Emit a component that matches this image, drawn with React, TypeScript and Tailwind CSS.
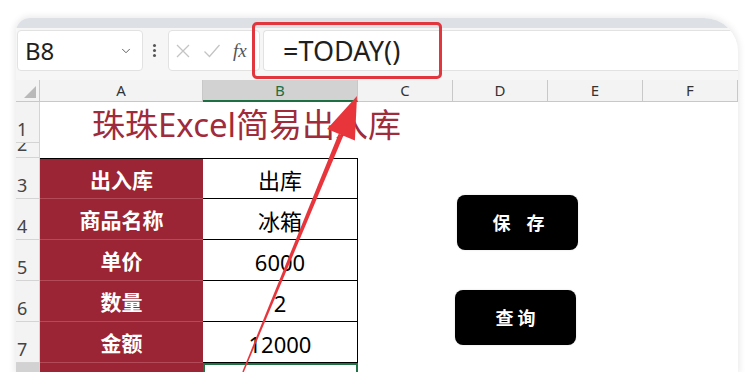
import { Fragment } from "react"
import { ChevronDown } from "lucide-react"

type RowProp = {
  n: string
  label: string
  value: string
  row: string
}

const rows: RowProp[] = [
  { n: "3", label: "出入库", value: "出库", row: "row-start-3" },
  { n: "4", label: "商品名称", value: "冰箱", row: "row-start-4" },
  { n: "5", label: "单价", value: "6000", row: "row-start-5" },
  { n: "6", label: "数量", value: "2", row: "row-start-6" },
  { n: "7", label: "金额", value: "12000", row: "row-start-7" },
]

const cols = ["C", "D", "E", "F"]

function RowHead({ n, row, active }: { n: string; row: string; active?: boolean }) {
  return (
    <div
      className={`${row} col-start-1 flex items-end overflow-hidden border-b border-r border-[#d4d4d4] pl-[1px] pb-[4px] text-[18px] leading-none text-[#444] ${
        active ? "bg-[#d2d2d2]" : "bg-[#f3f3f3]"
      }`}
    >
      {n}
    </div>
  )
}

export default function App() {
  return (
    <div
      className="relative h-[372px] w-[753px] overflow-hidden bg-white"
      style={{ fontFamily: '"Noto Sans", "Noto Sans CJK SC", sans-serif' }}
    >
      <div className="pl-[16px] pt-[18px]">
        <div className="flex h-[354px] w-[722px] flex-col overflow-hidden rounded-tl-[14px] rounded-tr-[34px] bg-white shadow-[0_0_6px_2px_rgba(0,0,0,0.08)]">
          {/* title strip */}
          <div className="h-[10px] shrink-0 bg-[#dde1e6]" />

          {/* formula bar */}
          <div className="flex h-[52px] shrink-0 items-start bg-[#f6f6f6] pl-[1px] pt-[2px]">
            <div className="flex h-[41px] w-[126px] items-center justify-between rounded-[4px] border border-[#e2e2e2] bg-white pl-[7px] pr-[9px]">
              <span className="text-[24px] leading-none text-[#1f1f1f]">B8</span>
              <ChevronDown size={14} strokeWidth={1.6} className="text-[#555]" />
            </div>
            <div className="ml-[10px] flex h-[41px] flex-col items-center justify-center gap-[2px]">
              <span className="h-[3px] w-[3px] rounded-full bg-[#555]" />
              <span className="h-[3px] w-[3px] rounded-full bg-[#555]" />
              <span className="h-[3px] w-[3px] rounded-full bg-[#555]" />
            </div>
            <div className="ml-[12px] flex h-[41px] w-[92px] items-center gap-[12px] rounded-[4px] border border-[#e2e2e2] bg-white pl-[6px]">
              <svg width="16" height="16" viewBox="0 0 16 16" stroke="#c4c4c4" strokeWidth="1.3" fill="none">
                <path d="M2 2 14 14M14 2 2 14" />
              </svg>
              <svg width="18" height="16" viewBox="0 0 18 16" stroke="#c4c4c4" strokeWidth="1.3" fill="none">
                <path d="M1.5 8.5 6.5 13.5 16.5 2" />
              </svg>
              <span
                className="text-[19px] italic leading-none text-[#555]"
                style={{ fontFamily: '"Liberation Serif", serif' }}
              >
                fx
              </span>
            </div>
            <div className="ml-[3px] flex h-[41px] flex-1 items-center rounded-l-[4px] border border-r-0 border-[#e2e2e2] bg-white pl-[19px]">
              <span className="text-[27px] leading-none text-[#1f1f1f]">=TODAY()</span>
            </div>
          </div>

          {/* column headers */}
          <div className="flex h-[22px] shrink-0 bg-[#f3f3f3] text-[15px] leading-none text-[#333]">
            <div className="relative w-[24px] border-b border-r border-[#c8c8c8]">
              <div className="absolute bottom-[3px] right-[3px] h-0 w-0 border-b-[12px] border-l-[12px] border-b-[#b9b9b9] border-l-transparent" />
            </div>
            <div className="flex w-[163px] items-center justify-center border-b border-r border-[#c8c8c8]">A</div>
            <div className="flex w-[155px] items-center justify-center border-b-2 border-r border-b-[#1e6f43] border-r-[#c8c8c8] bg-[#d2d2d2] text-[#1e6f43]">
              B
            </div>
            {cols.map((c) => (
              <div key={c} className="flex w-[95px] items-center justify-center border-b border-r border-[#c8c8c8]">
                {c}
              </div>
            ))}
          </div>

          {/* sheet */}
          <div className="grid shrink-0 grid-cols-[24px_163px_155px_95px_95px_95px_95px] grid-rows-[41px_15px_41px_41px_41px_41px_41px_41px]">
            <RowHead n="1" row="row-start-1" />
            <RowHead n="2" row="row-start-2" />
            <div className="col-span-3 col-start-2 row-start-1 flex items-center whitespace-nowrap pl-[52px] pt-[4px] text-[33px] leading-none text-[#a02b3b]">
              珠珠Excel简易出入库
            </div>

            {rows.map((r) => (
              <Fragment key={r.n}>
                <RowHead n={r.n} row={r.row} />
                <div
                  className={`${r.row} col-start-2 flex items-center justify-center border-b border-[#b24a57] bg-[#9b2534] pt-[3px] text-[21px] font-bold leading-none text-white ${
                    r.n === "3" ? "border-t border-t-black" : ""
                  }`}
                >
                  {r.label}
                </div>
                <div
                  className={`${r.row} col-start-3 flex items-center justify-center border-b border-r border-black bg-white pt-[3px] text-[22px] leading-none text-black ${
                    r.n === "3" ? "border-t" : ""
                  }`}
                >
                  {r.value}
                </div>
              </Fragment>
            ))}

            <RowHead n="8" row="row-start-8" active />
            <div className="col-start-2 row-start-8 bg-[#9b2534]" />
            <div className="col-start-3 row-start-8 border-2 border-[#217346] bg-white" />

            {/* buttons */}
            <div className="col-span-3 col-start-5 row-span-6 row-start-3 flex flex-col items-start pt-[37px]">
              <button className="ml-[4px] flex h-[55px] w-[121px] items-center justify-center rounded-[8px] bg-black pl-[2px] text-[18px] font-bold leading-none text-white shadow-[0_0_2px_rgba(0,0,0,0.15)]">
                保<span className="w-[16px]" />存
              </button>
              <button className="ml-[2px] mt-[40px] flex h-[55px] w-[121px] items-center justify-center rounded-[8px] bg-black pl-[4px] text-[18px] font-bold leading-none tracking-[4px] text-white shadow-[0_0_2px_rgba(0,0,0,0.15)]">
                查询
              </button>
            </div>
          </div>
        </div>
      </div>

      {/* red highlight around the formula */}
      <div className="absolute left-[252px] top-[22px] h-[57px] w-[190px] rounded-[5px] border-[3px] border-[#e2363e]" />

      {/* red arrow */}
      <svg className="pointer-events-none absolute inset-0" width="753" height="372" viewBox="0 0 753 372">
        <polygon points="242.3,371.7 243.7,372.3 343.3,135.8 338.7,133.8" fill="#e8343b" />
        <polygon points="357,96 354.9,140.5 327.1,129.1" fill="#e8343b" />
      </svg>
    </div>
  )
}
